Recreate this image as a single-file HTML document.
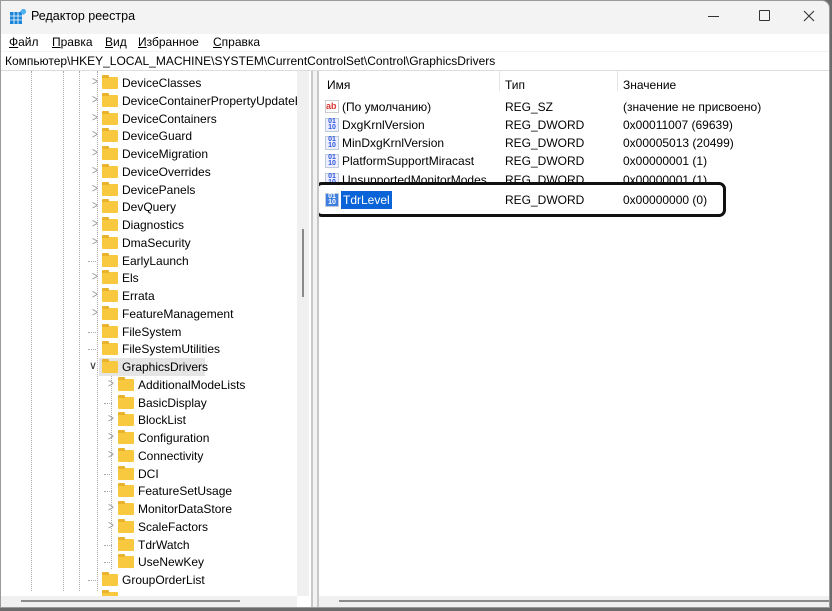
<!DOCTYPE html>
<html><head><meta charset="utf-8"><style>
*{margin:0;padding:0;box-sizing:border-box}
body{width:832px;height:611px;overflow:hidden;background:#6b6b6b;font-family:"Liberation Sans",sans-serif;font-size:12px;color:#000;position:relative}
.win{position:absolute;left:0;top:0;width:830px;height:608px;background:#f3f3f3;border:1px solid #9a9a9a;border-radius:0 8px 0 0;overflow:hidden}
.title{position:absolute;left:30px;top:8px;font-size:12.5px}
.menu{position:absolute;top:33px;left:0;width:100%;height:17px;background:#fff}
.menu span{position:absolute;top:1px;font-size:12px}
.addr{position:absolute;top:51px;left:0;width:100%;height:19px;background:#fff;border-bottom:1px solid #ddd;padding:2px 4px;font-size:12px;white-space:nowrap}
.lp{position:absolute;left:0;top:70px;width:312px;height:536px;background:#fff;border-right:2px solid #c8c8c8;overflow:hidden}
.rp{position:absolute;left:316px;top:70px;width:516px;height:536px;background:#fff;border-left:2px solid #c8c8c8;overflow:hidden}
.r{position:absolute;height:18px;line-height:18px;white-space:nowrap;font-size:12px}
.f{position:absolute;width:16px;height:12px;background:#f8c93e;border-radius:1px;top:3px}
.f:before{content:"";position:absolute;left:0;top:-2px;width:7px;height:3px;background:#e9b32c;border-radius:1px 1px 0 0}
.ch{position:absolute;top:0;font-size:10px;color:#999;transform:scaleY(1.3)}
.vl{position:absolute;border-left:1px dotted #aaa}
.hl{position:absolute;border-top:1px dotted #aaa;width:8px}
.ic{position:absolute;left:6px;width:14px;height:14px;top:2px;font-size:7px;line-height:6px;color:#2b57d8;font-weight:bold;text-align:center;background:#eef;border:1px solid #bcd}
</style></head><body>
<div class="win">
<svg style="position:absolute;left:9px;top:8px" width="16" height="16"><rect x="0" y="3" width="12" height="12" fill="#1a84d8"/><g stroke="#fff" stroke-width="0.8"><line x1="4" y1="3" x2="4" y2="15"/><line x1="8" y1="3" x2="8" y2="15"/><line x1="0" y1="7" x2="12" y2="7"/><line x1="0" y1="11" x2="12" y2="11"/></g><rect x="11" y="0" width="5" height="5" fill="#4fb0f0" transform="rotate(45 13.5 2.5)"/></svg>
<div class="title">Редактор реестра</div>
<div style="position:absolute;left:707px;top:15px;width:11px;border-top:1px solid #333"></div>
<div style="position:absolute;left:758px;top:9px;width:11px;height:11px;border:1px solid #333;border-radius:1px"></div>
<svg style="position:absolute;left:802px;top:9px" width="12" height="12"><path d="M1 1L11 11M11 1L1 11" stroke="#333" stroke-width="1.1"/></svg>
<div class="menu"><span style="left:8px"><u>Ф</u>айл</span><span style="left:51px"><u>П</u>равка</span><span style="left:104px"><u>В</u>ид</span><span style="left:137px"><u>И</u>збранное</span><span style="left:212px"><u>С</u>правка</span></div>
<div class="addr">Компьютер\HKEY_LOCAL_MACHINE\SYSTEM\CurrentControlSet\Control\GraphicsDrivers</div>
<div class="lp">
<div class="vl" style="left:30px;top:0;height:520px"></div>
<div class="vl" style="left:62px;top:0;height:520px"></div>
<div class="vl" style="left:78px;top:0;height:520px"></div>
<div class="vl" style="left:96px;top:0;height:520px"></div>
<div class="vl" style="left:110px;top:305px;height:193px"></div>
<div id="t"></div>
<div style="position:absolute;left:296px;top:0;width:12px;height:525px;background:#f0f0f0"></div>
<div style="position:absolute;left:301px;top:158px;width:2px;height:68px;background:#8a8a8a"></div>
<div style="position:absolute;left:0;top:525px;width:296px;height:12px;background:#f0f0f0"></div>
<div style="position:absolute;left:20px;top:529px;width:219px;height:2px;background:#8a8a8a"></div>
</div>
<div class="rp">
<div style="position:absolute;left:180px;top:0;height:20px;border-left:1px solid #e5e5e5"></div>
<div style="position:absolute;left:298px;top:0;height:20px;border-left:1px solid #e5e5e5"></div>
<div class="r" style="left:8px;top:5px">Имя</div><div class="r" style="left:186px;top:5px">Тип</div><div class="r" style="left:304px;top:5px">Значение</div>
<div class="r" style="left:0;top:27px;width:500px"><span style="position:absolute;left:6px;top:2px;width:14px;height:13px;background:#fff;border:1px solid #ccc;color:#d33;font-size:9px;font-weight:bold;line-height:10px">ab</span><span style="position:absolute;left:23px">(По умолчанию)</span><span style="position:absolute;left:186px">REG_SZ</span><span style="position:absolute;left:304px">(значение не присвоено)</span></div>
<div class="r" style="left:0;top:45px;width:500px"><span class="ic">01<br>10</span><span style="position:absolute;left:23px">DxgKrnlVersion</span><span style="position:absolute;left:186px">REG_DWORD</span><span style="position:absolute;left:304px">0x00011007 (69639)</span></div>
<div class="r" style="left:0;top:63px;width:500px"><span class="ic">01<br>10</span><span style="position:absolute;left:23px">MinDxgKrnlVersion</span><span style="position:absolute;left:186px">REG_DWORD</span><span style="position:absolute;left:304px">0x00005013 (20499)</span></div>
<div class="r" style="left:0;top:81px;width:500px"><span class="ic">01<br>10</span><span style="position:absolute;left:23px">PlatformSupportMiracast</span><span style="position:absolute;left:186px">REG_DWORD</span><span style="position:absolute;left:304px">0x00000001 (1)</span></div>
<div class="r" style="left:0;top:100px;width:500px"><span class="ic">01<br>10</span><span style="position:absolute;left:23px">UnsupportedMonitorModes...</span><span style="position:absolute;left:186px">REG_DWORD</span><span style="position:absolute;left:304px">0x00000001 (1)</span></div>
<div style="position:absolute;left:-4px;top:111px;width:411px;height:35px;border:3px solid #111;border-radius:7px;background:#fff"></div>
<div class="r" style="left:0;top:120px;width:500px"><span class="ic" style="background:#3d7ee0;color:#fff">01<br>10</span><span style="position:absolute;left:22px;background:#0a64d8;color:#fff;padding:0 2px">TdrLevel</span><span style="position:absolute;left:186px">REG_DWORD</span><span style="position:absolute;left:304px">0x00000000 (0)</span></div>
<div style="position:absolute;left:0;top:525px;width:516px;height:12px;background:#f0f0f0"></div>
<div style="position:absolute;left:20px;top:529px;width:496px;height:2px;background:#8a8a8a"></div>
</div>
</div>
<script>
var items=[["DeviceClasses",1,1],["DeviceContainerPropertyUpdateE",1,1],["DeviceContainers",1,1],["DeviceGuard",1,1],["DeviceMigration",1,1],["DeviceOverrides",1,1],["DevicePanels",1,1],["DevQuery",1,1],["Diagnostics",1,1],["DmaSecurity",1,1],["EarlyLaunch",1,0],["Els",1,1],["Errata",1,1],["FeatureManagement",1,1],["FileSystem",1,0],["FileSystemUtilities",1,0],["GraphicsDrivers",1,2],["AdditionalModeLists",2,1],["BasicDisplay",2,0],["BlockList",2,1],["Configuration",2,1],["Connectivity",2,1],["DCI",2,0],["FeatureSetUsage",2,0],["MonitorDataStore",2,1],["ScaleFactors",2,1],["TdrWatch",2,0],["UseNewKey",2,0],["GroupOrderList",1,0],["",1,0]];
var h="";
items.forEach(function(it,i){var top=Math.round(3+i*17.75);var fx=it[1]==1?101:117;var tx=fx+20;
if(it[2]==2)h+='<div style="position:absolute;left:98px;top:'+top+'px;width:106px;height:18px;background:#e5e5e5"></div>';
if(it[2]==1)h+='<div class="r ch" style="left:'+(fx-10)+'px;top:'+top+'px">&gt;</div>';
else if(it[2]==2)h+='<div class="r" style="left:88px;top:'+(top-1)+'px;font-size:11px;color:#333">&#8744;</div>';
else h+='<div class="hl" style="left:'+(fx-14)+'px;top:'+(top+9)+'px"></div>';
h+='<div class="r" style="left:'+fx+'px;top:'+top+'px;width:16px"><div class="f"></div></div>';
h+='<div class="r" style="left:'+tx+'px;top:'+top+'px">'+it[0]+'</div>';});
document.getElementById("t").innerHTML=h;
</script>
</body></html>
